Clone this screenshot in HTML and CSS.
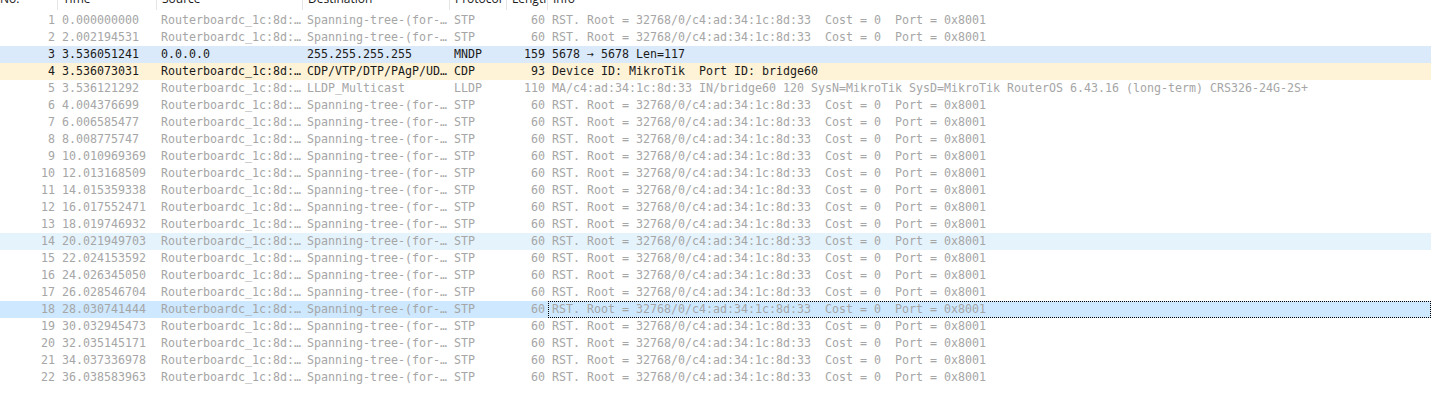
FILE: index.html
```html
<!DOCTYPE html>
<html>
<head>
<meta charset="utf-8">
<link rel="stylesheet" href="styles.css">
</head>
<body>
<div class="list">
  <div class="hdr">
    <div class="hc first">No.</div>
    <div class="hc">Time</div>
    <div class="hc">Source</div>
    <div class="hc">Destination</div>
    <div class="hc">Protocol</div>
    <div class="hc">Length</div>
    <div class="hc last">Info</div>
  </div>
  <div class="row dim"><div class="c no">1</div><div class="c">0.000000000</div><div class="c">Routerboardc_1c:8d:…</div><div class="c">Spanning-tree-(for-…</div><div class="c">STP</div><div class="c len">60</div><div class="c info">RST. Root = 32768/0/c4:ad:34:1c:8d:33  Cost = 0  Port = 0x8001</div></div>
  <div class="row dim"><div class="c no">2</div><div class="c">2.002194531</div><div class="c">Routerboardc_1c:8d:…</div><div class="c">Spanning-tree-(for-…</div><div class="c">STP</div><div class="c len">60</div><div class="c info">RST. Root = 32768/0/c4:ad:34:1c:8d:33  Cost = 0  Port = 0x8001</div></div>
  <div class="row mndp"><div class="c no">3</div><div class="c">3.536051241</div><div class="c">0.0.0.0</div><div class="c">255.255.255.255</div><div class="c">MNDP</div><div class="c len">159</div><div class="c info">5678 → 5678 Len=117</div></div>
  <div class="row cdp"><div class="c no">4</div><div class="c">3.536073031</div><div class="c">Routerboardc_1c:8d:…</div><div class="c">CDP/VTP/DTP/PAgP/UD…</div><div class="c">CDP</div><div class="c len">93</div><div class="c info">Device ID: MikroTik  Port ID: bridge60</div></div>
  <div class="row dim"><div class="c no">5</div><div class="c">3.536121292</div><div class="c">Routerboardc_1c:8d:…</div><div class="c">LLDP_Multicast</div><div class="c">LLDP</div><div class="c len">110</div><div class="c info">MA/c4:ad:34:1c:8d:33 IN/bridge60 120 SysN=MikroTik SysD=MikroTik RouterOS 6.43.16 (long-term) CRS326-24G-2S+</div></div>
  <div class="row dim"><div class="c no">6</div><div class="c">4.004376699</div><div class="c">Routerboardc_1c:8d:…</div><div class="c">Spanning-tree-(for-…</div><div class="c">STP</div><div class="c len">60</div><div class="c info">RST. Root = 32768/0/c4:ad:34:1c:8d:33  Cost = 0  Port = 0x8001</div></div>
  <div class="row dim"><div class="c no">7</div><div class="c">6.006585477</div><div class="c">Routerboardc_1c:8d:…</div><div class="c">Spanning-tree-(for-…</div><div class="c">STP</div><div class="c len">60</div><div class="c info">RST. Root = 32768/0/c4:ad:34:1c:8d:33  Cost = 0  Port = 0x8001</div></div>
  <div class="row dim"><div class="c no">8</div><div class="c">8.008775747</div><div class="c">Routerboardc_1c:8d:…</div><div class="c">Spanning-tree-(for-…</div><div class="c">STP</div><div class="c len">60</div><div class="c info">RST. Root = 32768/0/c4:ad:34:1c:8d:33  Cost = 0  Port = 0x8001</div></div>
  <div class="row dim"><div class="c no">9</div><div class="c">10.010969369</div><div class="c">Routerboardc_1c:8d:…</div><div class="c">Spanning-tree-(for-…</div><div class="c">STP</div><div class="c len">60</div><div class="c info">RST. Root = 32768/0/c4:ad:34:1c:8d:33  Cost = 0  Port = 0x8001</div></div>
  <div class="row dim"><div class="c no">10</div><div class="c">12.013168509</div><div class="c">Routerboardc_1c:8d:…</div><div class="c">Spanning-tree-(for-…</div><div class="c">STP</div><div class="c len">60</div><div class="c info">RST. Root = 32768/0/c4:ad:34:1c:8d:33  Cost = 0  Port = 0x8001</div></div>
  <div class="row dim"><div class="c no">11</div><div class="c">14.015359338</div><div class="c">Routerboardc_1c:8d:…</div><div class="c">Spanning-tree-(for-…</div><div class="c">STP</div><div class="c len">60</div><div class="c info">RST. Root = 32768/0/c4:ad:34:1c:8d:33  Cost = 0  Port = 0x8001</div></div>
  <div class="row dim"><div class="c no">12</div><div class="c">16.017552471</div><div class="c">Routerboardc_1c:8d:…</div><div class="c">Spanning-tree-(for-…</div><div class="c">STP</div><div class="c len">60</div><div class="c info">RST. Root = 32768/0/c4:ad:34:1c:8d:33  Cost = 0  Port = 0x8001</div></div>
  <div class="row dim"><div class="c no">13</div><div class="c">18.019746932</div><div class="c">Routerboardc_1c:8d:…</div><div class="c">Spanning-tree-(for-…</div><div class="c">STP</div><div class="c len">60</div><div class="c info">RST. Root = 32768/0/c4:ad:34:1c:8d:33  Cost = 0  Port = 0x8001</div></div>
  <div class="row dim hover"><div class="c no">14</div><div class="c">20.021949703</div><div class="c">Routerboardc_1c:8d:…</div><div class="c">Spanning-tree-(for-…</div><div class="c">STP</div><div class="c len">60</div><div class="c info">RST. Root = 32768/0/c4:ad:34:1c:8d:33  Cost = 0  Port = 0x8001</div></div>
  <div class="row dim"><div class="c no">15</div><div class="c">22.024153592</div><div class="c">Routerboardc_1c:8d:…</div><div class="c">Spanning-tree-(for-…</div><div class="c">STP</div><div class="c len">60</div><div class="c info">RST. Root = 32768/0/c4:ad:34:1c:8d:33  Cost = 0  Port = 0x8001</div></div>
  <div class="row dim"><div class="c no">16</div><div class="c">24.026345050</div><div class="c">Routerboardc_1c:8d:…</div><div class="c">Spanning-tree-(for-…</div><div class="c">STP</div><div class="c len">60</div><div class="c info">RST. Root = 32768/0/c4:ad:34:1c:8d:33  Cost = 0  Port = 0x8001</div></div>
  <div class="row dim"><div class="c no">17</div><div class="c">26.028546704</div><div class="c">Routerboardc_1c:8d:…</div><div class="c">Spanning-tree-(for-…</div><div class="c">STP</div><div class="c len">60</div><div class="c info">RST. Root = 32768/0/c4:ad:34:1c:8d:33  Cost = 0  Port = 0x8001</div></div>
  <div class="row dim sel"><div class="c no">18</div><div class="c">28.030741444</div><div class="c">Routerboardc_1c:8d:…</div><div class="c">Spanning-tree-(for-…</div><div class="c">STP</div><div class="c len">60</div><div class="c info focus">RST. Root = 32768/0/c4:ad:34:1c:8d:33  Cost = 0  Port = 0x8001</div></div>
  <div class="row dim"><div class="c no">19</div><div class="c">30.032945473</div><div class="c">Routerboardc_1c:8d:…</div><div class="c">Spanning-tree-(for-…</div><div class="c">STP</div><div class="c len">60</div><div class="c info">RST. Root = 32768/0/c4:ad:34:1c:8d:33  Cost = 0  Port = 0x8001</div></div>
  <div class="row dim"><div class="c no">20</div><div class="c">32.035145171</div><div class="c">Routerboardc_1c:8d:…</div><div class="c">Spanning-tree-(for-…</div><div class="c">STP</div><div class="c len">60</div><div class="c info">RST. Root = 32768/0/c4:ad:34:1c:8d:33  Cost = 0  Port = 0x8001</div></div>
  <div class="row dim"><div class="c no">21</div><div class="c">34.037336978</div><div class="c">Routerboardc_1c:8d:…</div><div class="c">Spanning-tree-(for-…</div><div class="c">STP</div><div class="c len">60</div><div class="c info">RST. Root = 32768/0/c4:ad:34:1c:8d:33  Cost = 0  Port = 0x8001</div></div>
  <div class="row dim"><div class="c no">22</div><div class="c">36.038583963</div><div class="c">Routerboardc_1c:8d:…</div><div class="c">Spanning-tree-(for-…</div><div class="c">STP</div><div class="c len">60</div><div class="c info">RST. Root = 32768/0/c4:ad:34:1c:8d:33  Cost = 0  Port = 0x8001</div></div>
</div>
</body>
</html>
```

FILE: styles.css
```css
html, body {
  margin: 0;
  padding: 0;
  background: #ffffff;
  overflow: hidden;
}

.list {
  width: 1431px;
  margin-top: -12px;
}

.hdr,
.row {
  display: grid;
  grid-template-columns: 58px 99px 146px 147px 57px 41px 1fr;
}

.hdr {
  height: 24px;
  font-family: "Open Sans", "Noto Sans", sans-serif;
  font-size: 12px;
  color: #1a1a1a;
}

.hc {
  height: 22px;
  line-height: 22px;
  padding: 0 5px;
  border-right: 1px solid #e5e5e5;
  white-space: nowrap;
  overflow: hidden;
}

.hc.first {
  padding-left: 0;
}

.hc.last {
  border-right: none;
}

.row {
  height: 17px;
  line-height: 17px;
  font-family: "DejaVu Sans Mono", "Liberation Mono", monospace;
  font-size: 11.63px;
  color: #1a1a1a;
}

.c {
  padding: 0 3px 0 4px;
  white-space: pre;
  overflow: hidden;
}

.c.no,
.c.len {
  text-align: right;
  padding: 0 3px 0 0;
}

.c.info {
  padding-left: 4px;
}

.row.dim {
  color: #a6a6a6;
}

.row.mndp {
  background: #dbeafa;
}

.row.cdp {
  background: #fff3d7;
}

.row.hover {
  background: #e5f3fd;
}

.row.sel {
  background: #cde8ff;
}

.c.focus {
  border: 1px dotted #000000;
  line-height: 15px;
  padding-left: 3px;
}
```
